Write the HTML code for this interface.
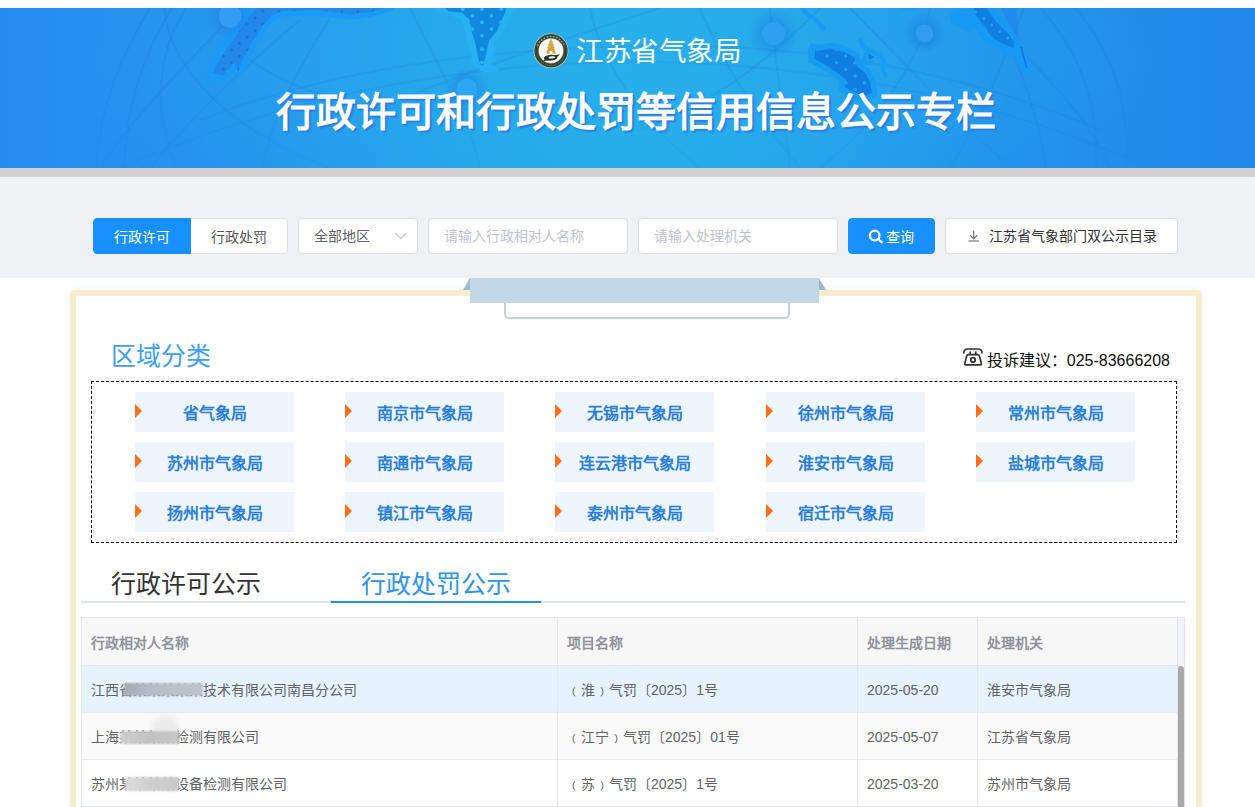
<!DOCTYPE html>
<html lang="zh-CN">
<head>
<meta charset="utf-8">
<title>行政许可和行政处罚等信用信息公示专栏</title>
<style>
*{box-sizing:border-box;margin:0;padding:0}
html,body{width:1255px;height:807px;overflow:hidden;background:#fff}
body{font-family:"Liberation Sans",sans-serif;color:#333;position:relative}
.abs{position:absolute}
/* banner */
#banner{position:absolute;left:0;top:8px;width:1255px;height:160px;overflow:hidden;
 background:radial-gradient(ellipse 560px 150px at 610px 50px,rgba(40,178,238,.42),rgba(40,178,238,.25) 50%,rgba(40,178,238,0) 100%),linear-gradient(90deg,#258bf1 0%,#2596ee 20%,#25a7ea 38%,#26aee8 50%,#25a6ea 62%,#2293ec 80%,#2088ea 100%)}
#banner svg{position:absolute;left:0;top:0}
#org{position:absolute;left:576px;top:28px;letter-spacing:.5px;font-size:27.5px;line-height:32px;color:#fff;white-space:nowrap}
#title{position:absolute;left:0;width:1272px;top:76px;text-align:center;font-size:40px;line-height:56px;font-weight:bold;color:#fff;white-space:nowrap;letter-spacing:0px;text-shadow:2px 2px 1px rgba(48,122,224,.9)}
#strip{position:absolute;left:0;top:168px;width:1255px;height:9px;background:#d2d0d1}
#searchbg{position:absolute;left:0;top:177px;width:1255px;height:101px;background:#f0f1f4}
/* search controls */
.ctl{position:absolute;top:218px;height:36px;line-height:35px;font-size:14px;border:1px solid #dcdfe6;border-radius:4px;background:#fff;white-space:nowrap;color:#606266}
#tab1{left:93px;width:98px;line-height:37px;background:#1890ff;border-color:#1890ff;color:#fff;text-align:center;border-radius:4px 0 0 4px}
#tab2{left:191px;width:97px;line-height:37px;text-align:center;border-radius:0 4px 4px 0;border-left:none;color:#555}
#sel{left:298px;width:120px;padding-left:15px}
#in1{left:428px;width:200px;padding-left:15px;color:#c0c4cc}
#in2{left:638px;width:200px;padding-left:15px;color:#c0c4cc}
#btn{left:848px;width:87px;background:#1890ff;border-color:#1890ff;color:#fff}
#dl{left:945px;width:233px;color:#333;font-size:14px}
/* card */
#card{position:absolute;left:70px;top:290px;width:1132px;height:540px;border:6px solid #f6edcf;border-radius:5px;background:#fff;box-shadow:0 0 7px rgba(120,130,170,.12)}
#ribbon{position:absolute;left:470px;top:278px;width:349px;height:25px;background:#c3d8e6}
#ribl{position:absolute;left:463px;top:278px;width:0;height:0;border-left:7px solid transparent;border-bottom:12px solid #9db8cf}
#ribr{position:absolute;left:819px;top:278px;width:0;height:0;border-right:7px solid transparent;border-bottom:12px solid #9db8cf}
#ribbox{position:absolute;left:504px;top:300px;width:286px;height:19px;border:2px solid #bdd4e4;border-top:none;border-radius:0 0 5px 5px;background:#fff}
#h1{position:absolute;left:111px;top:340px;font-weight:300;font-size:25px;line-height:32px;color:#409eff;white-space:nowrap}
#tel{position:absolute;right:85px;top:351px;font-size:16px;line-height:20px;color:#111;white-space:nowrap}
#dash{position:absolute;left:91px;top:381px;width:1086px;height:162px;border:1px dashed #000}
.it{position:absolute;width:159px;height:40px;background:#eef5fd;color:#2a7fd6;font-weight:bold;font-size:16px;line-height:44px;text-align:center;white-space:nowrap}
.it:before{content:"";position:absolute;left:0;top:12px;width:0;height:0;border-left:7px solid #ff6f1a;border-top:7px solid transparent;border-bottom:7px solid transparent}
.t{position:absolute;top:567px;font-weight:300;font-size:25px;line-height:34px;white-space:nowrap}
#line{position:absolute;left:81px;top:601px;width:1104px;height:2px;background:#dde6ef}
#line2{position:absolute;left:331px;top:601px;width:210px;height:2px;background:#2490f5}
/* table */
#tbl{position:absolute;left:81px;top:617px;width:1104px;height:190px;border-top:1px solid #dfe6ee;border-left:1px solid #e4e7ed;border-right:1px solid #e4e7ed;background:#fff}
.row{position:absolute;left:0;width:1096px;height:47px;border-bottom:1px solid #e4e7ed}
.c{position:absolute;top:0;height:47px;line-height:49px;font-size:14px;color:#606266;padding-left:9px;border-right:1px solid #e4e7ed;white-space:nowrap}
.h .c{font-weight:bold;color:#909399;font-size:14px;height:48px;line-height:50px}
.c1{left:0;width:476px}.c2{left:476px;width:300px}.c3{left:776px;width:120px}.c4{left:896px;width:200px}
.blur{position:absolute;filter:blur(1.2px);border-radius:2px}
#sb{position:absolute;left:1178px;top:666px;width:6px;height:150px;background:#a8a8a8;border-radius:3px}
#gut{position:absolute;left:1178px;top:618px;width:6px;height:47px;background:#f3f4fa}
</style>
</head>
<body>
<div id="banner">
<svg width="1255" height="160" viewBox="0 8 1255 160">
<defs>
<clipPath id="cA"><path d="M257 6 L240 30 L223 54 L212 73 L223 75.5 L234 63 L238.5 72 L239.6 66.4 L244 57.5 L253 41 L263 25 L272 15 L282 11 L314 10 L352 14.5 L371 12 L388 7 L392 6 Z"/></clipPath>
<clipPath id="cB"><path d="M443 6 L448.5 11.4 L462 12.7 L469.6 20 L472 32.5 L475.8 45 L478.2 58.5 L480.7 64.7 L483.2 66 L485.7 56 L487.5 47.4 L489.4 40 L496.8 31.3 L501.8 20 L505.5 11.4 L507 6 Z"/></clipPath>
<clipPath id="cC"><path d="M815.4 49.2 L821 50.5 L831 48.6 L844.5 52.3 L854.4 57.3 L855.5 62 L857 66 L865.6 73.4 L870.5 83.3 L871.8 92.6 L864.3 97 L844.5 87 L845.8 79.6 L839.6 74.6 L827.2 66 L814.2 58.5 Z"/></clipPath>
<clipPath id="cD"><path d="M973.7 6 L985.6 6 L995.6 21 L1007.5 32.8 L1015.4 43.7 L1013.4 48 L1003.5 43.7 L991.6 37.7 L986.6 28.8 L979.7 20 L974.7 14 Z"/></clipPath>
<radialGradient id="ng"><stop offset="0.42" stop-color="#156fd8" stop-opacity=".34"/><stop offset="1" stop-color="#156fd8" stop-opacity="0"/></radialGradient>
<radialGradient id="gl" cx="50%" cy="100%" r="75%"><stop offset="0" stop-color="#2fb4f2" stop-opacity=".10"/><stop offset="1" stop-color="#2fb4f2" stop-opacity="0"/></radialGradient>
<linearGradient id="fd" x1="0" y1="0" x2="0" y2="1"><stop offset="0" stop-color="#fff"/><stop offset=".45" stop-color="#fff" stop-opacity=".85"/><stop offset="1" stop-color="#fff" stop-opacity=".35"/></linearGradient><mask id="mk" maskUnits="userSpaceOnUse" x="0" y="0" width="1255" height="176"><rect x="0" y="8" width="1255" height="160" fill="url(#fd)"/></mask>
</defs>
<g fill="none" stroke="#1868d4" stroke-opacity=".15" stroke-width="2.2" mask="url(#mk)">
<path d="M150 8 C118 60 100 110 96 168"/><path d="M172 8 C140 60 126 110 124 168"/><path d="M186 8 C160 50 150 100 176 168"/>
<path d="M240 8 C190 60 130 120 100 168"/><path d="M300 20 C240 70 190 120 150 168"/><path d="M164 8 C170 70 230 130 330 168"/>
<path d="M330 18 C290 80 270 130 262 168"/><path d="M410 8 C440 70 470 120 480 168"/><path d="M250 60 C320 110 420 120 560 100"/>
<path d="M400 100 C470 70 560 40 660 8"/><path d="M200 120 C330 70 470 50 636 46 S960 70 1100 130"/><path d="M120 168 C300 90 480 62 636 62 S980 90 1150 168"/>
<path d="M590 8 C600 60 640 120 700 168"/><path d="M700 8 C720 60 760 120 800 168"/><path d="M770 8 C775 60 785 120 790 168"/>
<path d="M820 8 C760 70 700 110 640 130"/><path d="M850 8 C900 60 960 120 1010 168"/><path d="M930 8 C920 60 880 120 820 168"/>
<path d="M990 8 C1020 60 1040 120 1046 168"/><path d="M1040 8 C1080 50 1100 110 1096 168"/><path d="M1075 8 C1120 60 1130 120 1126 168"/>
<path d="M1024 8 C1000 70 980 120 950 168"/><path d="M1010 40 C1050 80 1090 120 1110 168"/>
</g>
<path d="M248 5 L232 30 L219 49 L210 68 L205.5 84 L214 80.5 L224 80 L233 71 L236.5 75 L242 75 L244 66 L249 57 L257 42 L267 27 L275 19 L283 15.5 L314 14.8 L352 19 L371 16.5 L390 10.7 L398 5 Z" fill="#1a9bf6" stroke="#1a9bf6" stroke-width="1.5" stroke-linejoin="round"/>
<path d="M257 6 L240 30 L223 54 L212 73 L223 75.5 L234 63 L238.5 72 L239.6 66.4 L244 57.5 L253 41 L263 25 L272 15 L282 11 L314 10 L352 14.5 L371 12 L388 7 L392 6 Z" fill="#2389e8"/>
<g clip-path="url(#cA)" fill="#1a77d9" fill-opacity="1"><circle cx="215.6" cy="75.4" r="1.6"/><circle cx="215.6" cy="62.6" r="1.6"/><circle cx="215.6" cy="49.8" r="1.6"/><circle cx="215.6" cy="37.0" r="1.6"/><circle cx="215.6" cy="24.2" r="1.6"/><circle cx="215.6" cy="11.4" r="1.6"/><circle cx="223.5" cy="69.0" r="1.6"/><circle cx="223.5" cy="56.2" r="1.6"/><circle cx="223.5" cy="43.4" r="1.6"/><circle cx="223.5" cy="30.6" r="1.6"/><circle cx="223.5" cy="17.8" r="1.6"/><circle cx="223.5" cy="5.0" r="1.6"/><circle cx="231.4" cy="75.4" r="1.6"/><circle cx="231.4" cy="62.6" r="1.6"/><circle cx="231.4" cy="49.8" r="1.6"/><circle cx="231.4" cy="37.0" r="1.6"/><circle cx="231.4" cy="24.2" r="1.6"/><circle cx="231.4" cy="11.4" r="1.6"/><circle cx="239.3" cy="69.0" r="1.6"/><circle cx="239.3" cy="56.2" r="1.6"/><circle cx="239.3" cy="43.4" r="1.6"/><circle cx="239.3" cy="30.6" r="1.6"/><circle cx="239.3" cy="17.8" r="1.6"/><circle cx="239.3" cy="5.0" r="1.6"/><circle cx="247.2" cy="75.4" r="1.6"/><circle cx="247.2" cy="62.6" r="1.6"/><circle cx="247.2" cy="49.8" r="1.6"/><circle cx="247.2" cy="37.0" r="1.6"/><circle cx="247.2" cy="24.2" r="1.6"/><circle cx="247.2" cy="11.4" r="1.6"/><circle cx="255.1" cy="69.0" r="1.6"/><circle cx="255.1" cy="56.2" r="1.6"/><circle cx="255.1" cy="43.4" r="1.6"/><circle cx="255.1" cy="30.6" r="1.6"/><circle cx="255.1" cy="17.8" r="1.6"/><circle cx="255.1" cy="5.0" r="1.6"/><circle cx="263.0" cy="75.4" r="1.6"/><circle cx="263.0" cy="62.6" r="1.6"/><circle cx="263.0" cy="49.8" r="1.6"/><circle cx="263.0" cy="37.0" r="1.6"/><circle cx="263.0" cy="24.2" r="1.6"/><circle cx="263.0" cy="11.4" r="1.6"/><circle cx="270.9" cy="69.0" r="1.6"/><circle cx="270.9" cy="56.2" r="1.6"/><circle cx="270.9" cy="43.4" r="1.6"/><circle cx="270.9" cy="30.6" r="1.6"/><circle cx="270.9" cy="17.8" r="1.6"/><circle cx="270.9" cy="5.0" r="1.6"/><circle cx="278.8" cy="75.4" r="1.6"/><circle cx="278.8" cy="62.6" r="1.6"/><circle cx="278.8" cy="49.8" r="1.6"/><circle cx="278.8" cy="37.0" r="1.6"/><circle cx="278.8" cy="24.2" r="1.6"/><circle cx="278.8" cy="11.4" r="1.6"/><circle cx="286.7" cy="69.0" r="1.6"/><circle cx="286.7" cy="56.2" r="1.6"/><circle cx="286.7" cy="43.4" r="1.6"/><circle cx="286.7" cy="30.6" r="1.6"/><circle cx="286.7" cy="17.8" r="1.6"/><circle cx="286.7" cy="5.0" r="1.6"/><circle cx="294.6" cy="75.4" r="1.6"/><circle cx="294.6" cy="62.6" r="1.6"/><circle cx="294.6" cy="49.8" r="1.6"/><circle cx="294.6" cy="37.0" r="1.6"/><circle cx="294.6" cy="24.2" r="1.6"/><circle cx="294.6" cy="11.4" r="1.6"/><circle cx="302.5" cy="69.0" r="1.6"/><circle cx="302.5" cy="56.2" r="1.6"/><circle cx="302.5" cy="43.4" r="1.6"/><circle cx="302.5" cy="30.6" r="1.6"/><circle cx="302.5" cy="17.8" r="1.6"/><circle cx="302.5" cy="5.0" r="1.6"/><circle cx="310.4" cy="75.4" r="1.6"/><circle cx="310.4" cy="62.6" r="1.6"/><circle cx="310.4" cy="49.8" r="1.6"/><circle cx="310.4" cy="37.0" r="1.6"/><circle cx="310.4" cy="24.2" r="1.6"/><circle cx="310.4" cy="11.4" r="1.6"/><circle cx="318.3" cy="69.0" r="1.6"/><circle cx="318.3" cy="56.2" r="1.6"/><circle cx="318.3" cy="43.4" r="1.6"/><circle cx="318.3" cy="30.6" r="1.6"/><circle cx="318.3" cy="17.8" r="1.6"/><circle cx="318.3" cy="5.0" r="1.6"/><circle cx="326.2" cy="75.4" r="1.6"/><circle cx="326.2" cy="62.6" r="1.6"/><circle cx="326.2" cy="49.8" r="1.6"/><circle cx="326.2" cy="37.0" r="1.6"/><circle cx="326.2" cy="24.2" r="1.6"/><circle cx="326.2" cy="11.4" r="1.6"/><circle cx="334.1" cy="69.0" r="1.6"/><circle cx="334.1" cy="56.2" r="1.6"/><circle cx="334.1" cy="43.4" r="1.6"/><circle cx="334.1" cy="30.6" r="1.6"/><circle cx="334.1" cy="17.8" r="1.6"/><circle cx="334.1" cy="5.0" r="1.6"/><circle cx="342.0" cy="75.4" r="1.6"/><circle cx="342.0" cy="62.6" r="1.6"/><circle cx="342.0" cy="49.8" r="1.6"/><circle cx="342.0" cy="37.0" r="1.6"/><circle cx="342.0" cy="24.2" r="1.6"/><circle cx="342.0" cy="11.4" r="1.6"/><circle cx="349.9" cy="69.0" r="1.6"/><circle cx="349.9" cy="56.2" r="1.6"/><circle cx="349.9" cy="43.4" r="1.6"/><circle cx="349.9" cy="30.6" r="1.6"/><circle cx="349.9" cy="17.8" r="1.6"/><circle cx="349.9" cy="5.0" r="1.6"/><circle cx="357.8" cy="75.4" r="1.6"/><circle cx="357.8" cy="62.6" r="1.6"/><circle cx="357.8" cy="49.8" r="1.6"/><circle cx="357.8" cy="37.0" r="1.6"/><circle cx="357.8" cy="24.2" r="1.6"/><circle cx="357.8" cy="11.4" r="1.6"/><circle cx="365.7" cy="69.0" r="1.6"/><circle cx="365.7" cy="56.2" r="1.6"/><circle cx="365.7" cy="43.4" r="1.6"/><circle cx="365.7" cy="30.6" r="1.6"/><circle cx="365.7" cy="17.8" r="1.6"/><circle cx="365.7" cy="5.0" r="1.6"/><circle cx="373.6" cy="75.4" r="1.6"/><circle cx="373.6" cy="62.6" r="1.6"/><circle cx="373.6" cy="49.8" r="1.6"/><circle cx="373.6" cy="37.0" r="1.6"/><circle cx="373.6" cy="24.2" r="1.6"/><circle cx="373.6" cy="11.4" r="1.6"/><circle cx="381.5" cy="69.0" r="1.6"/><circle cx="381.5" cy="56.2" r="1.6"/><circle cx="381.5" cy="43.4" r="1.6"/><circle cx="381.5" cy="30.6" r="1.6"/><circle cx="381.5" cy="17.8" r="1.6"/><circle cx="381.5" cy="5.0" r="1.6"/><circle cx="389.4" cy="75.4" r="1.6"/><circle cx="389.4" cy="62.6" r="1.6"/><circle cx="389.4" cy="49.8" r="1.6"/><circle cx="389.4" cy="37.0" r="1.6"/><circle cx="389.4" cy="24.2" r="1.6"/><circle cx="389.4" cy="11.4" r="1.6"/></g>
<path d="M433 5 L437 11.6 L460.5 17.6 L464.6 25 L468 40 L472 56 L474.5 66 L485.7 71.8 L496.8 71.8 L497.6 69.5 L489.6 63.5 L493.3 52.3 L492 43.7 L500.5 35 L508.2 20 L510.8 11.4 L519 5 Z" fill="#27b1f3" stroke="#27b1f3" stroke-width="1.5" stroke-linejoin="round"/>
<path d="M443 6 L448.5 11.4 L462 12.7 L469.6 20 L472 32.5 L475.8 45 L478.2 58.5 L480.7 64.7 L483.2 66 L485.7 56 L487.5 47.4 L489.4 40 L496.8 31.3 L501.8 20 L505.5 11.4 L507 6 Z" fill="#1088de"/>
<g clip-path="url(#cB)" fill="#2ab5f3" fill-opacity="1"><circle cx="434.0" cy="2.3" r="1.9"/><circle cx="434.0" cy="15.7" r="1.9"/><circle cx="434.0" cy="29.1" r="1.9"/><circle cx="434.0" cy="42.5" r="1.9"/><circle cx="434.0" cy="55.9" r="1.9"/><circle cx="434.0" cy="69.3" r="1.9"/><circle cx="443.6" cy="9.0" r="1.9"/><circle cx="443.6" cy="22.4" r="1.9"/><circle cx="443.6" cy="35.8" r="1.9"/><circle cx="443.6" cy="49.2" r="1.9"/><circle cx="443.6" cy="62.6" r="1.9"/><circle cx="453.2" cy="2.3" r="1.9"/><circle cx="453.2" cy="15.7" r="1.9"/><circle cx="453.2" cy="29.1" r="1.9"/><circle cx="453.2" cy="42.5" r="1.9"/><circle cx="453.2" cy="55.9" r="1.9"/><circle cx="453.2" cy="69.3" r="1.9"/><circle cx="462.8" cy="9.0" r="1.9"/><circle cx="462.8" cy="22.4" r="1.9"/><circle cx="462.8" cy="35.8" r="1.9"/><circle cx="462.8" cy="49.2" r="1.9"/><circle cx="462.8" cy="62.6" r="1.9"/><circle cx="472.4" cy="2.3" r="1.9"/><circle cx="472.4" cy="15.7" r="1.9"/><circle cx="472.4" cy="29.1" r="1.9"/><circle cx="472.4" cy="42.5" r="1.9"/><circle cx="472.4" cy="55.9" r="1.9"/><circle cx="472.4" cy="69.3" r="1.9"/><circle cx="482.0" cy="9.0" r="1.9"/><circle cx="482.0" cy="22.4" r="1.9"/><circle cx="482.0" cy="35.8" r="1.9"/><circle cx="482.0" cy="49.2" r="1.9"/><circle cx="482.0" cy="62.6" r="1.9"/><circle cx="491.6" cy="2.3" r="1.9"/><circle cx="491.6" cy="15.7" r="1.9"/><circle cx="491.6" cy="29.1" r="1.9"/><circle cx="491.6" cy="42.5" r="1.9"/><circle cx="491.6" cy="55.9" r="1.9"/><circle cx="491.6" cy="69.3" r="1.9"/><circle cx="501.2" cy="9.0" r="1.9"/><circle cx="501.2" cy="22.4" r="1.9"/><circle cx="501.2" cy="35.8" r="1.9"/><circle cx="501.2" cy="49.2" r="1.9"/><circle cx="501.2" cy="62.6" r="1.9"/><circle cx="510.8" cy="2.3" r="1.9"/><circle cx="510.8" cy="15.7" r="1.9"/><circle cx="510.8" cy="29.1" r="1.9"/><circle cx="510.8" cy="42.5" r="1.9"/><circle cx="510.8" cy="55.9" r="1.9"/><circle cx="510.8" cy="69.3" r="1.9"/><circle cx="520.4" cy="9.0" r="1.9"/><circle cx="520.4" cy="22.4" r="1.9"/><circle cx="520.4" cy="35.8" r="1.9"/><circle cx="520.4" cy="49.2" r="1.9"/><circle cx="520.4" cy="62.6" r="1.9"/></g>
<path d="M811 44 L822 45.5 L832 43.5 L846 47 L858 53.5 L860.5 63 L869.5 70 L875.3 82 L876.5 95 L864.5 102.5 L840 91 L840.5 81.5 L836 78 L824.5 70 L809.5 61.5 L808.5 50 Z" fill="#189cf2" stroke="#189cf2" stroke-width="1.5" stroke-linejoin="round"/>
<path d="M815.4 49.2 L821 50.5 L831 48.6 L844.5 52.3 L854.4 57.3 L855.5 62 L857 66 L865.6 73.4 L870.5 83.3 L871.8 92.6 L864.3 97 L844.5 87 L845.8 79.6 L839.6 74.6 L827.2 66 L814.2 58.5 Z" fill="#0e7ee0"/>
<g clip-path="url(#cC)" fill="#2a9ff2" fill-opacity="1"><circle cx="808.6" cy="42.6" r="1.8"/><circle cx="808.6" cy="56.0" r="1.8"/><circle cx="808.6" cy="69.4" r="1.8"/><circle cx="808.6" cy="82.8" r="1.8"/><circle cx="808.6" cy="96.2" r="1.8"/><circle cx="817.9" cy="49.3" r="1.8"/><circle cx="817.9" cy="62.7" r="1.8"/><circle cx="817.9" cy="76.1" r="1.8"/><circle cx="817.9" cy="89.5" r="1.8"/><circle cx="817.9" cy="102.9" r="1.8"/><circle cx="827.2" cy="42.6" r="1.8"/><circle cx="827.2" cy="56.0" r="1.8"/><circle cx="827.2" cy="69.4" r="1.8"/><circle cx="827.2" cy="82.8" r="1.8"/><circle cx="827.2" cy="96.2" r="1.8"/><circle cx="836.5" cy="49.3" r="1.8"/><circle cx="836.5" cy="62.7" r="1.8"/><circle cx="836.5" cy="76.1" r="1.8"/><circle cx="836.5" cy="89.5" r="1.8"/><circle cx="836.5" cy="102.9" r="1.8"/><circle cx="845.8" cy="42.6" r="1.8"/><circle cx="845.8" cy="56.0" r="1.8"/><circle cx="845.8" cy="69.4" r="1.8"/><circle cx="845.8" cy="82.8" r="1.8"/><circle cx="845.8" cy="96.2" r="1.8"/><circle cx="855.1" cy="49.3" r="1.8"/><circle cx="855.1" cy="62.7" r="1.8"/><circle cx="855.1" cy="76.1" r="1.8"/><circle cx="855.1" cy="89.5" r="1.8"/><circle cx="855.1" cy="102.9" r="1.8"/><circle cx="864.4" cy="42.6" r="1.8"/><circle cx="864.4" cy="56.0" r="1.8"/><circle cx="864.4" cy="69.4" r="1.8"/><circle cx="864.4" cy="82.8" r="1.8"/><circle cx="864.4" cy="96.2" r="1.8"/><circle cx="873.7" cy="49.3" r="1.8"/><circle cx="873.7" cy="62.7" r="1.8"/><circle cx="873.7" cy="76.1" r="1.8"/><circle cx="873.7" cy="89.5" r="1.8"/><circle cx="873.7" cy="102.9" r="1.8"/><circle cx="883.0" cy="42.6" r="1.8"/><circle cx="883.0" cy="56.0" r="1.8"/><circle cx="883.0" cy="69.4" r="1.8"/><circle cx="883.0" cy="82.8" r="1.8"/><circle cx="883.0" cy="96.2" r="1.8"/></g>
<path d="M802.5 6 C803 12 808 15 812.5 17 C817 20 820 25 823.5 28.5" fill="none" stroke="#189cf2" stroke-width="4.6" stroke-linecap="round"/>
<path d="M860.6 39.5 C861 44 863 46 865 48 C870 50 874 52 877 54 C882 57 885 60 883.5 65 C882 69 883 72 885.5 75" fill="none" stroke="#189cf2" stroke-width="4.2" stroke-linecap="round"/>
<path d="M865 48 C867 53 866 58 862.5 61.5 C866 64 870 63 872 61" fill="none" stroke="#189cf2" stroke-width="4" stroke-linecap="round"/>
<path d="M868.6 53 L874.6 57.4 L868.2 59.4 Z" fill="#0e7ee0"/>
<path d="M898 5 Q909 14 921 5 Z" fill="#1590ea" stroke="#1a9cf2" stroke-width="2.5"/>
<path d="M999 5 L1016 5 L1019 42 Z" fill="#1d78ea" fill-opacity=".35"/>
<path d="M971 5 L991 5 L997 14 L1010 29 L1019.5 44 L1032.5 68 L1031 73.5 L1026 74 L1014 54 L1010.4 58 L999.5 47 L986 42 L974 25.5 L970 32 L951 21.5 L950.5 15.5 L956 10 L971 9.5 Z" fill="#169af4" stroke="#169af4" stroke-width="1.5" stroke-linejoin="round"/>
<path d="M959 14 L971 14.5 L971 16.5 L958 17 Z" fill="#2391ee"/>
<path d="M973.7 6 L985.6 6 L995.6 21 L1007.5 32.8 L1015.4 43.7 L1013.4 48 L1003.5 43.7 L991.6 37.7 L986.6 28.8 L979.7 20 L974.7 14 Z" fill="#0e80e2"/>
<g clip-path="url(#cD)" fill="#2a9ef4" fill-opacity="1"><circle cx="967.7" cy="5.4" r="1.5"/><circle cx="967.7" cy="18.4" r="1.5"/><circle cx="967.7" cy="31.4" r="1.5"/><circle cx="967.7" cy="44.4" r="1.5"/><circle cx="975.7" cy="-1.1" r="1.5"/><circle cx="975.7" cy="11.9" r="1.5"/><circle cx="975.7" cy="24.9" r="1.5"/><circle cx="975.7" cy="37.9" r="1.5"/><circle cx="975.7" cy="50.9" r="1.5"/><circle cx="983.7" cy="5.4" r="1.5"/><circle cx="983.7" cy="18.4" r="1.5"/><circle cx="983.7" cy="31.4" r="1.5"/><circle cx="983.7" cy="44.4" r="1.5"/><circle cx="991.7" cy="-1.1" r="1.5"/><circle cx="991.7" cy="11.9" r="1.5"/><circle cx="991.7" cy="24.9" r="1.5"/><circle cx="991.7" cy="37.9" r="1.5"/><circle cx="991.7" cy="50.9" r="1.5"/><circle cx="999.7" cy="5.4" r="1.5"/><circle cx="999.7" cy="18.4" r="1.5"/><circle cx="999.7" cy="31.4" r="1.5"/><circle cx="999.7" cy="44.4" r="1.5"/><circle cx="1007.7" cy="-1.1" r="1.5"/><circle cx="1007.7" cy="11.9" r="1.5"/><circle cx="1007.7" cy="24.9" r="1.5"/><circle cx="1007.7" cy="37.9" r="1.5"/><circle cx="1007.7" cy="50.9" r="1.5"/><circle cx="1015.7" cy="5.4" r="1.5"/><circle cx="1015.7" cy="18.4" r="1.5"/><circle cx="1015.7" cy="31.4" r="1.5"/><circle cx="1015.7" cy="44.4" r="1.5"/><circle cx="1023.7" cy="-1.1" r="1.5"/><circle cx="1023.7" cy="11.9" r="1.5"/><circle cx="1023.7" cy="24.9" r="1.5"/><circle cx="1023.7" cy="37.9" r="1.5"/><circle cx="1023.7" cy="50.9" r="1.5"/></g>
<path d="M1021.3 47.5 L1026.5 67.5" stroke="#1672dc" stroke-width="1.5" stroke-linecap="round"/>
<circle cx="230" cy="16" r="24" fill="url(#ng)"/><circle cx="230" cy="16" r="11.5" fill="#319df5"/>
<circle cx="467" cy="89" r="22" fill="url(#ng)"/><circle cx="467" cy="89" r="10.5" fill="#2ba8f1"/>
<circle cx="773.5" cy="33.5" r="25" fill="url(#ng)"/><circle cx="773.5" cy="33.5" r="11.5" fill="#2f9ff2"/>
<circle cx="924.5" cy="33.5" r="21" fill="url(#ng)"/><circle cx="924.5" cy="33.5" r="9" fill="#2d9cf2"/>
<g transform="translate(551 50.8)">
<circle r="17.4" fill="#d9cfa8"/><circle r="16.7" fill="#2f493e"/><circle r="12.6" fill="#cdb98a"/><circle r="12.1" fill="#fbfaf3"/>
<path d="M-13.4 -5 A14.3 14.3 0 0 1 13.4 -5" fill="none" stroke="#e8eae2" stroke-width="1.4" stroke-dasharray="1.6 1.6" stroke-opacity=".6"/>
<path d="M-12.5 7.5 A14.6 14.6 0 0 0 12.5 7.5" fill="none" stroke="#7d8f82" stroke-width="1" stroke-dasharray="1 1.2" stroke-opacity=".6"/>
<path d="M-0.4 -12.2 L0.4 -12.2 L1 -9.8 L1.9 -9.2 L1.6 -7.2 L2.8 -6.4 L2.4 -4.2 L3.7 -3.4 L3.3 -1 L4.4 -0.2 L4.3 3 L1.4 3 L1.4 0.8 Q0 -0.7 -1.4 0.8 L-1.4 3 L-4.3 3 L-4.4 -0.2 L-3.3 -1 L-3.7 -3.4 L-2.4 -4.2 L-2.8 -6.4 L-1.6 -7.2 L-1.9 -9.2 L-1 -9.8 Z" fill="#d8a544"/>
<ellipse cx="-0.3" cy="6.9" rx="6.8" ry="2.9" fill="#23382f" transform="rotate(-4 -0.3 6.9)"/><ellipse cx="0.9" cy="6.6" rx="3.3" ry="1.05" fill="#f4f3ea" transform="rotate(-4 0.9 6.6)"/>
<path d="M3 4.2 Q6.8 4.4 9 3 Q7.4 6 5 6.6" fill="#23382f"/>
<path d="M-3 9.6 Q-6 9.8 -8 10.4 Q-6.6 8.4 -5.4 7.8" fill="#23382f"/>
</g>
</svg>
<div id="org">江苏省气象局</div>
<div id="title">行政许可和行政处罚等信用信息公示专栏</div>
</div>
<div id="strip"></div>
<div id="searchbg"></div>
<div class="ctl" id="tab1">行政许可</div>
<div class="ctl" id="tab2">行政处罚</div>
<div class="ctl" id="sel">全部地区<svg style="position:absolute;left:95px;top:12px" width="14" height="10" viewBox="0 0 14 10" fill="none" stroke="#c0c4cc" stroke-width="1.2"><path d="M1.4 2.2 L6.8 7.6 L12.2 2.2"/></svg></div>
<div class="ctl" id="in1">请输入行政相对人名称</div>
<div class="ctl" id="in2">请输入处理机关</div>
<div class="ctl" id="btn"><svg style="position:absolute;left:19px;top:9px" width="16" height="16" viewBox="0 0 16 16"><circle cx="6.7" cy="7.5" r="4.8" fill="none" stroke="#fff" stroke-width="2.2"/><path d="M10.2 11 L13.8 14.4" stroke="#fff" stroke-width="2.4" stroke-linecap="round"/></svg><span style="position:absolute;left:37px;top:1px;font-weight:500">查询</span></div>
<div class="ctl" id="dl"><svg style="position:absolute;left:20px;top:9px" width="16" height="16" viewBox="0 0 16 16" fill="none" stroke="#606266" stroke-width="1.1"><path d="M7.7 2.5 V10.6 M4.1 7.2 L7.7 10.8 L11.3 7.2 M2.5 13 H13"/></svg><span style="position:absolute;left:43px">江苏省气象部门双公示目录</span></div>

<div id="card"></div>
<div id="ribl"></div><div id="ribr"></div>
<div id="ribbox"></div>
<div id="ribbon"></div>

<div id="h1">区域分类</div>
<svg class="abs" style="left:961px;top:346px" width="24" height="22" viewBox="961 346 24 22" fill="none" stroke="#333" stroke-width="1.7" stroke-linecap="round" stroke-linejoin="round"><path d="M963.8 352.8 C963.8 350.2 965.4 349 968 349 H977.8 C980.4 349 982 350.2 982 352.8"/><path d="M970.2 352 V354.4 M975.8 352 V354.4"/><path d="M968.2 354.6 H977.9 Q979 354.6 979.3 355.8 L981.4 363.4 Q981.7 364.9 980.3 364.9 H965.8 Q964.4 364.9 964.8 363.4 L966.8 355.8 Q967.1 354.6 968.2 354.6 Z"/><circle cx="973" cy="359.9" r="2.2" stroke-width="1.8"/></svg>
<div id="tel">投诉建议：025-83666208</div>
<div id="dash"></div>

<div class="it" style="left:135px;top:392px">省气象局</div>
<div class="it" style="left:345px;top:392px">南京市气象局</div>
<div class="it" style="left:555px;top:392px">无锡市气象局</div>
<div class="it" style="left:766px;top:392px">徐州市气象局</div>
<div class="it" style="left:976px;top:392px">常州市气象局</div>
<div class="it" style="left:135px;top:442px">苏州市气象局</div>
<div class="it" style="left:345px;top:442px">南通市气象局</div>
<div class="it" style="left:555px;top:442px">连云港市气象局</div>
<div class="it" style="left:766px;top:442px">淮安市气象局</div>
<div class="it" style="left:976px;top:442px">盐城市气象局</div>
<div class="it" style="left:135px;top:492px">扬州市气象局</div>
<div class="it" style="left:345px;top:492px">镇江市气象局</div>
<div class="it" style="left:555px;top:492px">泰州市气象局</div>
<div class="it" style="left:766px;top:492px">宿迁市气象局</div>

<div class="t" style="left:111px;color:#333">行政许可公示</div>
<div class="t" style="left:361px;color:#2e93ec">行政处罚公示</div>
<div id="line"></div><div id="line2"></div>

<div id="tbl">
 <div class="row h" style="top:0;height:48px;background:#f7f7f7"><div class="c c1">行政相对人名称</div><div class="c c2">项目名称</div><div class="c c3">处理生成日期</div><div class="c c4">处理机关</div></div>
 <div class="row" style="top:48px;background:#e6f3ff"><div class="c c1">江西省某某某某某技术有限公司南昌分公司</div><div class="c c2">﹙淮﹚气罚〔2025〕1号</div><div class="c c3">2025-05-20</div><div class="c c4">淮安市气象局</div></div>
 <div class="row" style="top:95px;background:#fafafa"><div class="c c1">上海某某某某检测有限公司</div><div class="c c2">﹙江宁﹚气罚〔2025〕01号</div><div class="c c3">2025-05-07</div><div class="c c4">江苏省气象局</div></div>
 <div class="row" style="top:142px;background:#fff"><div class="c c1">苏州某某某某设备检测有限公司</div><div class="c c2">﹙苏﹚气罚〔2025〕1号</div><div class="c c3">2025-03-20</div><div class="c c4">苏州市气象局</div></div>
</div>
<div class="blur" style="left:124px;top:683px;width:79px;height:13px;background:linear-gradient(90deg,#a6a9b0 0%,#b4bbc5 30%,#b9c1cb 60%,#bcc3cd 100%)"></div>
<div class="blur" style="left:152px;top:716px;width:26px;height:22px;border-radius:13px;background:#ececec;filter:blur(2px)"></div>
<div class="blur" style="left:120px;top:731px;width:59px;height:13px;background:linear-gradient(90deg,#cfcfcf 0%,#c2c2c2 50%,#c6c6c6 100%)"></div>
<div class="blur" style="left:125px;top:777px;width:54px;height:14px;background:linear-gradient(90deg,#dcdcdc 0%,#cfcfcf 50%,#c8c8c8 100%)"></div>
<div id="gut"></div><div id="sb"></div>
</body>
</html>
